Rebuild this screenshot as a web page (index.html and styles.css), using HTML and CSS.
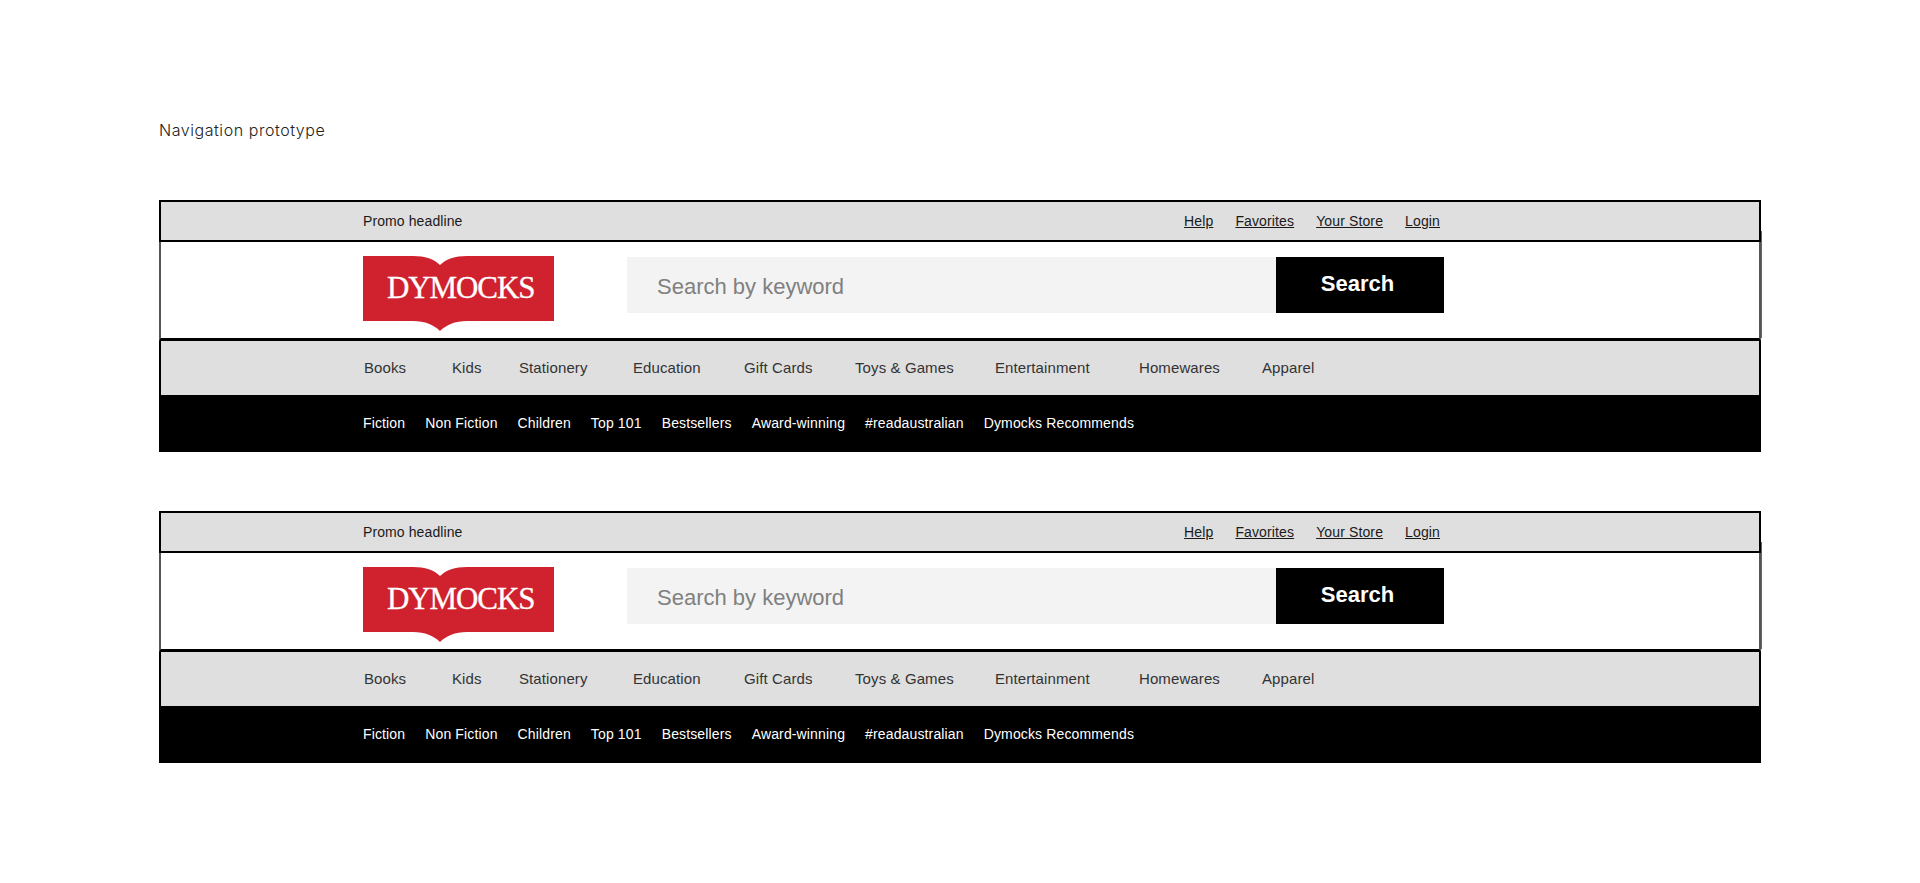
FILE: index.html
```html
<!DOCTYPE html>
<html lang="en">
<head>
  <meta charset="UTF-8" />
  <title>Navigation prototype</title>
  <link rel="stylesheet" href="styles.css">
</head>
<body>
  <p class="titulo">Navigation prototype</p>

  <header class="prototipo">
    <div class="promo">
      <div class="linha">
        <span>Promo headline</span>
        <nav class="links">
          <a href="#">Help</a>
          <a href="#">Favorites</a>
          <a href="#">Your Store</a>
          <a href="#">Login</a>
        </nav>
      </div>
    </div>
    <div class="busca">
      <div class="linha">
        <div class="logo">
          <svg class="logo-livro" viewBox="0 0 191 75" preserveAspectRatio="none" aria-hidden="true">
            <path d="M0 0H50C62 0 71 3 77 9C83 3 92 0 104 0H191V65H104C92 65 83 69 77 75C71 69 62 65 50 65H0Z" fill="#d0212e" />
          </svg>
          <span class="logo-texto">DYMOCKS</span>
        </div>
        <form class="campo">
          <input type="text" placeholder="Search by keyword" />
          <button type="button">Search</button>
        </form>
      </div>
    </div>
    <div class="menu">
      <nav class="linha menu-itens">
        <a href="#">Books</a>
        <a href="#">Kids</a>
        <a href="#">Stationery</a>
        <a href="#">Education</a>
        <a href="#">Gift Cards</a>
        <a href="#">Toys &amp; Games</a>
        <a href="#">Entertainment</a>
        <a href="#">Homewares</a>
        <a href="#">Apparel</a>
      </nav>
    </div>
    <div class="submenu">
      <nav class="linha submenu-itens">
        <a href="#">Fiction</a>
        <a href="#">Non Fiction</a>
        <a href="#">Children</a>
        <a href="#">Top 101</a>
        <a href="#">Bestsellers</a>
        <a href="#">Award-winning</a>
        <a href="#">#readaustralian</a>
        <a href="#">Dymocks Recommends</a>
      </nav>
    </div>
  </header>

  <header class="prototipo">
    <div class="promo">
      <div class="linha">
        <span>Promo headline</span>
        <nav class="links">
          <a href="#">Help</a>
          <a href="#">Favorites</a>
          <a href="#">Your Store</a>
          <a href="#">Login</a>
        </nav>
      </div>
    </div>
    <div class="busca">
      <div class="linha">
        <div class="logo">
          <svg class="logo-livro" viewBox="0 0 191 75" preserveAspectRatio="none" aria-hidden="true">
            <path d="M0 0H50C62 0 71 3 77 9C83 3 92 0 104 0H191V65H104C92 65 83 69 77 75C71 69 62 65 50 65H0Z" fill="#d0212e" />
          </svg>
          <span class="logo-texto">DYMOCKS</span>
        </div>
        <form class="campo">
          <input type="text" placeholder="Search by keyword" />
          <button type="button">Search</button>
        </form>
      </div>
    </div>
    <div class="menu">
      <nav class="linha menu-itens">
        <a href="#">Books</a>
        <a href="#">Kids</a>
        <a href="#">Stationery</a>
        <a href="#">Education</a>
        <a href="#">Gift Cards</a>
        <a href="#">Toys &amp; Games</a>
        <a href="#">Entertainment</a>
        <a href="#">Homewares</a>
        <a href="#">Apparel</a>
      </nav>
    </div>
    <div class="submenu">
      <nav class="linha submenu-itens">
        <a href="#">Fiction</a>
        <a href="#">Non Fiction</a>
        <a href="#">Children</a>
        <a href="#">Top 101</a>
        <a href="#">Bestsellers</a>
        <a href="#">Award-winning</a>
        <a href="#">#readaustralian</a>
        <a href="#">Dymocks Recommends</a>
      </nav>
    </div>
  </header>
</body>
</html>
```
FILE: styles.css
```css
* {
  box-sizing: border-box;
}

body {
  margin: 0;
  padding: 0 159px;
  background-color: #ffffff;
  font-family: "Liberation Sans", Arial, sans-serif;
  font-size: 14px;
  letter-spacing: 0.1px;
  color: #1a1a1a;
}

a {
  color: inherit;
  text-decoration: none;
}

.titulo {
  margin: 0;
  padding-top: 120px;
  height: 200px;
  font-family: Inter, sans-serif;
  font-size: 16px;
  font-weight: 300;
  line-height: 20px;
  letter-spacing: 0.55px;
  color: #222222;
}

.prototipo {
  width: 1602px;
  margin-bottom: 59px;
}

.linha {
  display: flex;
  align-items: center;
  height: 100%;
  margin-left: 204px;
  width: 1082px;
}

.promo {
  height: 42px;
  background-color: #dfdfdf;
  border: 2px solid #000000;
}

.promo .linha {
  margin-left: 202px;
  width: 1077px;
  justify-content: space-between;
}

.links {
  display: flex;
  gap: 22px;
  letter-spacing: 0.13px;
}

.links a {
  text-decoration: underline;
}

.busca {
  position: relative;
  height: 99px;
  border-left: 2px solid #555555;
  border-right: 2px solid #555555;
  border-bottom: 3px solid #000000;
}

/* a linha cinza passa 1px do quadro, como no layout original */
.busca::after {
  content: "";
  position: absolute;
  top: -11px;
  bottom: 0;
  right: -3px;
  width: 1px;
  background-color: #666666;
}

.busca .linha {
  margin-left: 202px;
  align-items: flex-start;
  padding-top: 14px;
}

.logo {
  position: relative;
  flex: none;
  width: 191px;
  height: 75px;
}

.logo-livro {
  display: block;
  width: 100%;
  height: 100%;
}

.logo-texto {
  position: absolute;
  left: 24px;
  top: 15px;
  font-family: "Liberation Serif", serif;
  font-size: 31px;
  line-height: 34px;
  letter-spacing: -1.1px;
  color: #ffffff;
  -webkit-text-stroke: 0.3px #ffffff;
}

.campo {
  display: flex;
  margin: 1px 0 0 73px;
}

.campo input {
  width: 649px;
  height: 56px;
  padding: 3px 30px 0;
  border: none;
  background-color: #f3f3f3;
  font-family: inherit;
  font-size: 22px;
}

.campo input::placeholder {
  color: #808080;
}

.campo button {
  width: 168px;
  height: 56px;
  padding: 0 5px 3px 0;
  border: none;
  background-color: #000000;
  color: #ffffff;
  font-family: inherit;
  font-size: 22px;
  font-weight: bold;
}

.menu {
  height: 54px;
  padding-bottom: 2px;
  background-color: #dfdfdf;
  border-left: 2px solid #000000;
  border-right: 2px solid #000000;
}

.menu-itens {
  display: grid;
  grid-template-columns: 88px 67px 114px 111px 111px 140px 144px 123px auto;
  margin-left: 203px;
  color: #333333;
  font-size: 15px;
}

.submenu {
  height: 57px;
  padding-bottom: 2px;
  background-color: #000000;
  color: #ffffff;
}

.submenu-itens {
  gap: 20px;
  letter-spacing: 0.14px;
}
```
